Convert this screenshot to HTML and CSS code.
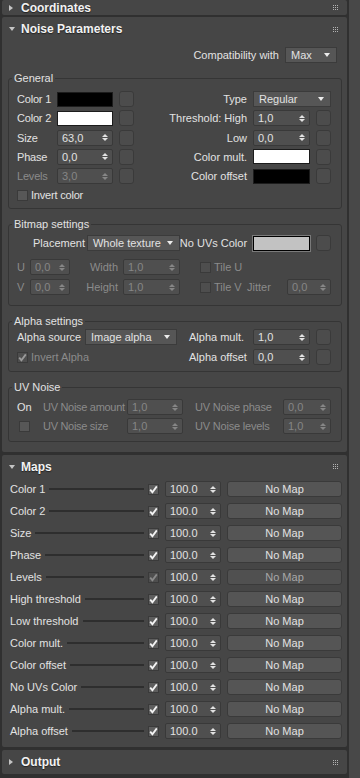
FILE: index.html
```html
<!DOCTYPE html>
<html lang="en">
<head>
  <meta charset="UTF-8">
  <meta name="viewport" content="width=device-width, initial-scale=1.0">
  <title>Noise Parameters</title>
  <link rel="stylesheet" href="styles.css">
</head>
<body>

  <div class="app">
    <div class="rollouts">

      <section class="rollout top">
        <div class="rollout-head">
          <span class="tw"><i class="tri-right"></i></span>
          <span class="title">Coordinates</span>
          <svg class="grip" width="5" height="5" viewBox="0 0 5 5"><g fill="#b4b4b4"><rect x="0" y="0" width="1" height="1"/><rect x="2" y="0" width="1" height="1"/><rect x="4" y="0" width="1" height="1"/><rect x="0" y="2" width="1" height="1"/><rect x="2" y="2" width="1" height="1"/><rect x="4" y="2" width="1" height="1"/><rect x="0" y="4" width="1" height="1"/><rect x="2" y="4" width="1" height="1"/><rect x="4" y="4" width="1" height="1"/></g></svg>
        </div>
      </section>

      <section class="rollout">
        <div class="rollout-head">
          <span class="tw"><i class="tri-down"></i></span>
          <span class="title">Noise Parameters</span>
          <svg class="grip" width="5" height="5" viewBox="0 0 5 5"><g fill="#b4b4b4"><rect x="0" y="0" width="1" height="1"/><rect x="2" y="0" width="1" height="1"/><rect x="4" y="0" width="1" height="1"/><rect x="0" y="2" width="1" height="1"/><rect x="2" y="2" width="1" height="1"/><rect x="4" y="2" width="1" height="1"/><rect x="0" y="4" width="1" height="1"/><rect x="2" y="4" width="1" height="1"/><rect x="4" y="4" width="1" height="1"/></g></svg>
        </div>
        <div class="noise-body">
          <div class="compat">
            <span>Compatibility with</span>
            <span class="drop compat-drop">Max</span>
          </div>

          <fieldset class="group general">
            <legend>General</legend>
            <div class="general-cols">
              <div class="grid gl">
                <span>Color 1</span><span class="swatch black"></span><span class="mbtn"></span>
                <span>Color 2</span><span class="swatch white"></span><span class="mbtn"></span>
                <span>Size</span><span class="spin"><span>63,0</span><i class="ud"></i></span><span class="mbtn"></span>
                <span>Phase</span><span class="spin"><span>0,0</span><i class="ud"></i></span><span class="mbtn"></span>
                <span class="dis">Levels</span><span class="spin dis"><span>3,0</span><i class="ud"></i></span><span class="mbtn"></span>
                <label class="cbrow span3"><span class="cb"></span><span>Invert color</span></label>
              </div>
              <div class="grid gr">
                <span class="lbl">Type</span><span class="drop span2">Regular</span>
                <span class="lbl">Threshold: High</span><span class="spin"><span>1,0</span><i class="ud"></i></span><span class="mbtn"></span>
                <span class="lbl">Low</span><span class="spin"><span>0,0</span><i class="ud"></i></span><span class="mbtn"></span>
                <span class="lbl">Color mult.</span><span class="swatch white"></span><span class="mbtn"></span>
                <span class="lbl">Color offset</span><span class="swatch black"></span><span class="mbtn"></span>
              </div>
            </div>
          </fieldset>

          <fieldset class="group bitmap">
            <legend>Bitmap settings</legend>
            <div class="row placement-row">
              <span class="placement-label">Placement</span>
              <span class="drop w93">Whole texture</span>
              <span class="nouv-label">No UVs Color</span>
              <span class="swatch grey w57"></span>
              <span class="mbtn ml6"></span>
            </div>
            <div class="row uv-row first">
              <span class="uv-label dis">U</span>
              <span class="spin dis w40"><span>0,0</span><i class="ud"></i></span>
              <span class="wh-label dis">Width</span>
              <span class="spin dis w57"><span>1,0</span><i class="ud"></i></span>
              <label class="cbrow tile dis"><span class="cb"></span><span>Tile U</span></label>
            </div>
            <div class="row uv-row">
              <span class="uv-label dis">V</span>
              <span class="spin dis w40"><span>0,0</span><i class="ud"></i></span>
              <span class="wh-label dis">Height</span>
              <span class="spin dis w57"><span>1,0</span><i class="ud"></i></span>
              <label class="cbrow tile dis"><span class="cb"></span><span>Tile V</span></label>
              <span class="jitter-label dis">Jitter</span>
              <span class="spin dis w44"><span>0,0</span><i class="ud"></i></span>
            </div>
          </fieldset>

          <fieldset class="group alpha">
            <legend>Alpha settings</legend>
            <div class="row">
              <span class="asrc-label">Alpha source</span>
              <span class="drop w92">Image alpha</span>
              <span class="amul-label">Alpha mult.</span>
              <span class="spin w57"><span>1,0</span><i class="ud"></i></span>
              <span class="mbtn ml6"></span>
            </div>
            <div class="row second">
              <label class="cbrow invert-alpha dis"><span class="cb on"><svg width="9" height="9" viewBox="0 0 9 9"><path d="M1.2 4.6 L3.4 7.2 L7.8 1.4" fill="none" stroke="currentColor" stroke-width="1.8"/></svg></span><span>Invert Alpha</span></label>
              <span class="amul-label">Alpha offset</span>
              <span class="spin w57"><span>0,0</span><i class="ud"></i></span>
              <span class="mbtn ml6"></span>
            </div>
          </fieldset>

          <fieldset class="group uvnoise">
            <legend>UV Noise</legend>
            <div class="row">
              <span class="on-label">On</span>
              <span class="uvn-label dis">UV Noise amount</span>
              <span class="spin dis w56"><span>1,0</span><i class="ud"></i></span>
              <span class="uvn-label2 dis">UV Noise phase</span>
              <span class="spin dis w48"><span>0,0</span><i class="ud"></i></span>
            </div>
            <div class="row second">
              <span class="on-label"><span class="cb on-cb"></span></span>
              <span class="uvn-label dis">UV Noise size</span>
              <span class="spin dis w56"><span>1,0</span><i class="ud"></i></span>
              <span class="uvn-label2 dis">UV Noise levels</span>
              <span class="spin dis w48"><span>1,0</span><i class="ud"></i></span>
            </div>
          </fieldset>
        </div>
      </section>

      <section class="rollout">
        <div class="rollout-head maps-head">
          <span class="tw"><i class="tri-down"></i></span>
          <span class="title">Maps</span>
          <svg class="grip" width="5" height="5" viewBox="0 0 5 5"><g fill="#b4b4b4"><rect x="0" y="0" width="1" height="1"/><rect x="2" y="0" width="1" height="1"/><rect x="4" y="0" width="1" height="1"/><rect x="0" y="2" width="1" height="1"/><rect x="2" y="2" width="1" height="1"/><rect x="4" y="2" width="1" height="1"/><rect x="0" y="4" width="1" height="1"/><rect x="2" y="4" width="1" height="1"/><rect x="4" y="4" width="1" height="1"/></g></svg>
        </div>
        <div class="maps-body" id="maps"></div>
      </section>

      <section class="rollout">
        <div class="rollout-head">
          <span class="tw"><i class="tri-right"></i></span>
          <span class="title">Output</span>
          <svg class="grip" width="5" height="5" viewBox="0 0 5 5"><g fill="#b4b4b4"><rect x="0" y="0" width="1" height="1"/><rect x="2" y="0" width="1" height="1"/><rect x="4" y="0" width="1" height="1"/><rect x="0" y="2" width="1" height="1"/><rect x="2" y="2" width="1" height="1"/><rect x="4" y="2" width="1" height="1"/><rect x="0" y="4" width="1" height="1"/><rect x="2" y="4" width="1" height="1"/><rect x="4" y="4" width="1" height="1"/></g></svg>
        </div>
      </section>

    </div>
    <div class="scrollbar"></div>
  </div>

  <script>
    const maps = ['Color 1', 'Color 2', 'Size', 'Phase', 'Levels', 'High threshold',
      'Low threshold', 'Color mult.', 'Color offset', 'No UVs Color', 'Alpha mult.', 'Alpha offset'];

    const check = '<svg width="9" height="9" viewBox="0 0 9 9"><path d="M1.2 4.6 L3.4 7.2 L7.8 1.4" fill="none" stroke="currentColor" stroke-width="1.8"/></svg>';

    let html = '';
    maps.forEach(function (name) {
      const off = name === 'Levels' ? ' dim' : '';
      html += '<div class="map-row' + off + '">' +
        '<span class="map-label">' + name + '</span>' +
        '<span class="leader"></span>' +
        '<span class="cb on">' + check + '</span>' +
        '<span class="spin w56 ml6"><span>100.0</span><i class="ud"></i></span>' +
        '<span class="nomap">No Map</span>' +
        '</div>';
    });
    document.getElementById('maps').innerHTML = html;
  </script>

</body>
</html>
```

FILE: styles.css
```css
* {
  box-sizing: border-box;
}

body {
  margin: 0;
  background-color: #303030;
  font-family: "Liberation Sans", Arial, sans-serif;
  font-size: 11px;
  line-height: 14px;
  color: #e2e2e2;
  white-space: nowrap;
}

.app {
  display: flex;
  width: 360px;
  height: 778px;
  overflow: hidden;
}

.rollouts {
  width: 347px;
  padding-left: 2px;
}

.scrollbar {
  width: 11px;
  margin-left: 2px;
  background-color: #484848;
}

/* rollouts */

.rollout {
  background-color: #464646;
  border-radius: 2px;
  margin-bottom: 3px;
}

.rollout-head {
  display: flex;
  align-items: center;
  height: 24px;
  padding: 0 7px 0 7px;
}

.rollout.top {
  margin-bottom: 2px;
}

.rollout.top .rollout-head {
  height: 15px;
}

.maps-head {
  height: 23px;
}

.tw {
  width: 12px;
  display: flex;
  align-items: center;
}

.tri-right {
  border-top: 3px solid transparent;
  border-bottom: 3px solid transparent;
  border-left: 4px solid #c4c4c4;
}

.tri-down {
  border-left: 3.5px solid transparent;
  border-right: 3.5px solid transparent;
  border-top: 4px solid #c4c4c4;
}

.title {
  font-weight: bold;
  font-size: 12px;
  color: #f2f2f2;
  text-shadow: 0 1px 1px #222;
}

.grip {
  margin-left: auto;
  margin-right: 2px;
}

/* noise parameters */

.noise-body {
  padding: 0 5px 10px 6px;
}

.compat {
  display: flex;
  align-items: center;
  justify-content: flex-end;
  padding-right: 5px;
  margin-top: 6px;
}

.compat-drop {
  width: 52px;
  height: 17px;
  margin-left: 6px;
}

.group {
  margin: 8px 0 0 0;
  padding: 5px 10px 7px 8px;
  border: 1px solid #353535;
  border-radius: 3px;
  min-width: 0;
}

.group.general {
  padding-top: 6px;
  padding-bottom: 5px;
}

.group legend {
  padding: 0 2px;
  margin-left: -5px;
  line-height: 14px;
}

.general-cols {
  display: flex;
  justify-content: space-between;
}

.grid {
  display: grid;
  row-gap: 3.25px;
  column-gap: 6px;
  align-items: center;
  grid-auto-rows: 16px;
}

.gl {
  grid-template-columns: 34px 56px 15px;
  letter-spacing: -0.2px;
}

.gr {
  grid-template-columns: auto 57px 15px;
}

.gr .lbl {
  text-align: right;
}

.span2 {
  grid-column: span 2;
}

.span3 {
  grid-column: span 3;
}

.row {
  display: flex;
  align-items: center;
  height: 16px;
}

.bitmap {
  padding: 4px 10px 10px 8px;
}

.uv-row.first {
  margin-top: 8px;
}

.uv-row + .uv-row {
  margin-top: 4px;
}

.placement-label {
  margin-left: 16px;
  width: 54px;
}

.nouv-label {
  flex: 1;
  text-align: right;
  padding-right: 6px;
}

.uv-label {
  width: 13px;
}

.wh-label {
  width: 53px;
  text-align: right;
  padding-right: 5px;
}

.tile {
  margin-left: 20px;
}

.jitter-label {
  margin-left: auto;
  width: 44px;
  padding-left: 4px;
}

.alpha {
  padding: 1px 10px 6px 8px;
}

.row.second {
  margin-top: 4px;
}

.uvnoise .row.second {
  margin-top: 3px;
}

.asrc-label {
  width: 68px;
}

.amul-label {
  width: 64px;
  margin-left: 12px;
}

.invert-alpha {
  width: 160px;
}

.uvnoise {
  padding: 5px 10px 7px 8px;
}

.on-label {
  width: 26px;
  display: flex;
  align-items: center;
}

.on-cb {
  margin-left: 2px;
}

.uvn-label {
  width: 84px;
  letter-spacing: -0.3px;
}

.uvn-label2 {
  width: 88px;
  margin-left: 12px;
  letter-spacing: -0.2px;
}

/* controls */

.dis {
  color: #8b8b8b;
}

.spin {
  display: flex;
  align-items: center;
  height: 16px;
  background-color: #4f4f4f;
  border: 1px solid #393939;
  border-radius: 2px;
  padding: 0 4px 0 4px;
  color: #e2e2e2;
  letter-spacing: 0;
}

.spin.dis {
  color: #868686;
}

.ud {
  margin-left: auto;
  display: flex;
  flex-direction: column;
  gap: 1px;
}

.ud::before,
.ud::after {
  content: "";
  border-left: 3px solid transparent;
  border-right: 3px solid transparent;
}

.ud::before {
  border-bottom: 3px solid currentColor;
}

.ud::after {
  border-top: 3px solid currentColor;
}

.drop {
  display: flex;
  align-items: center;
  height: 16px;
  background-color: #565656;
  border: 1px solid #3b3b3b;
  padding: 0 6px 0 5px;
}

.drop::after {
  content: "";
  margin-left: auto;
  border-left: 3.5px solid transparent;
  border-right: 3.5px solid transparent;
  border-top: 4px solid #ececec;
}

.mbtn {
  display: block;
  width: 15px;
  height: 16px;
  background-color: #4c4c4c;
  border: 1px solid #3a3a3a;
  border-radius: 3px;
}

.swatch {
  display: block;
  height: 15px;
  border: 1px solid #1c1c1c;
}

.swatch.black {
  background-color: #000;
}

.swatch.white {
  background-color: #fff;
}

.swatch.grey {
  background-color: #c2c2c2;
  border-color: #000;
  box-shadow: 0 0 0 1px #7a7a7a;
}

.cbrow {
  display: flex;
  align-items: center;
  gap: 3px;
}

.cb {
  display: inline-flex;
  align-items: center;
  justify-content: center;
  width: 11px;
  height: 11px;
  background-color: #575757;
  border: 1px solid #3a3a3a;
  color: #f4f4f4;
  flex-shrink: 0;
}

.cb.on {
  background-color: #5e5e5e;
}

.dis .cb {
  background-color: #4e4e4e;
  color: #9a9a9a;
}

.w40 { width: 40px; }
.w44 { width: 44px; }
.w48 { width: 48px; }
.w56 { width: 56px; }
.w57 { width: 57px; }
.w92 { width: 92px; }
.w93 { width: 93px; }
.ml6 { margin-left: 6px; }

/* maps */

.maps-body {
  padding: 0 5px 5px 8px;
}

.map-row {
  display: flex;
  align-items: center;
  height: 22px;
}

.leader {
  flex: 1;
  height: 2px;
  margin: 0 4px;
  background-color: #2e2e2e;
}

.nomap {
  width: 115px;
  height: 16px;
  margin-left: 6px;
  background-color: #555;
  border: 1px solid #3a3a3a;
  border-radius: 3px;
  text-align: center;
  line-height: 14px;
}

.map-row.dim .cb {
  background-color: #4e4e4e;
  color: #8a8a8a;
}

.map-row.dim .nomap {
  color: #a8a8a8;
  background-color: #505050;
}
```
